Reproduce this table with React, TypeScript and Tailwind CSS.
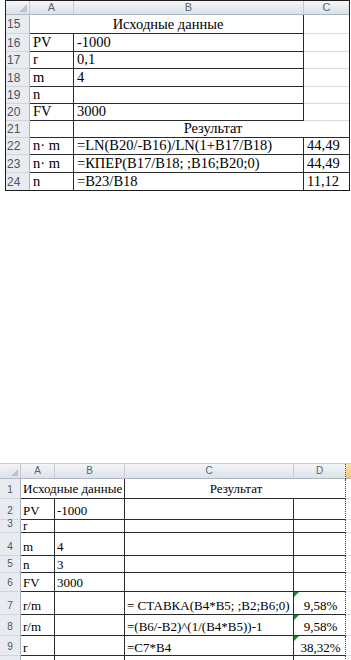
import React from "react";

const serif = "[font-family:'Liberation_Serif','Times_New_Roman',serif]";
const sans = "[font-family:'Liberation_Sans',Arial,sans-serif]";

function Cell({ w, cls = "", children }: { w: string; cls?: string; children?: React.ReactNode }) {
  return (
    <div className={`${w} shrink-0 flex items-end whitespace-nowrap overflow-visible leading-none relative ${cls}`}>
      {children}
    </div>
  );
}

function TopHead({ w, last, children }: { w: string; last?: boolean; children?: React.ReactNode }) {
  return (
    <div
      className={`${w} shrink-0 flex items-center justify-center border-b border-b-[#aeb7c2] ${last ? "" : "border-r border-r-[#c3cad3]"} bg-gradient-to-b from-[#f3f5f8] to-[#dde2e8] text-[11px] text-[#59626e] ${sans} leading-none`}
    >
      {children}
    </div>
  );
}

function TopRowNum({ n, last }: { n: string; last?: boolean }) {
  return (
    <div
      className={`w-[24px] shrink-0 flex items-center pl-[1px] bg-[#e8ebef] border-r border-r-[#a9b3bf] ${last ? "" : "border-b border-b-[#cfd5dc]"} text-[12px] text-[#4d5560] ${sans} leading-none`}
    >
      {n}
    </div>
  );
}

const D = "border-[#2a2a2a]";
const tp = `pl-[3px] pb-[2px] text-[14.5px] text-black ${serif}`;

function TopTable() {
  return (
    <div className="ml-[5px] w-[345px] border border-[#1e1e1e] bg-white">
      <div className="flex h-[14px]">
        <div className="w-[24px] shrink-0 relative border-r border-b border-r-[#c3cad3] border-b-[#aeb7c2] bg-gradient-to-b from-[#f3f5f8] to-[#dde2e8]">
          <svg className="absolute right-[2px] bottom-[2px]" width="8" height="8" viewBox="0 0 8 8">
            <polygon points="8,0 8,8 0,8" fill="#bcc3cc" />
          </svg>
        </div>
        <TopHead w="w-[44px]">A</TopHead>
        <TopHead w="w-[230px]">B</TopHead>
        <TopHead w="w-[45px]" last>C</TopHead>
      </div>

      {/* 15 */}
      <div className="flex h-[19px]">
        <TopRowNum n="15" />
        <Cell w="w-[274px]" cls={`border-r border-b ${D} justify-center ${tp} pl-0`}>Исходные данные</Cell>
        <Cell w="w-[45px]" cls="border-b border-b-[#dadada]" />
      </div>
      {[
        ["16", "PV", "-1000", "h-[18px]"],
        ["17", "r", "0,1", "h-[17px]"],
        ["18", "m", "4", "h-[18px]"],
        ["19", "n", "", "h-[17px]"],
        ["20", "FV", "3000", "h-[17px]"],
      ].map(([n, a, b, h]) => (
        <div key={n} className={`flex ${h}`}>
          <TopRowNum n={n} />
          <Cell w="w-[44px]" cls={`border-r border-b ${D} ${tp}`}>{a}</Cell>
          <Cell w="w-[230px]" cls={`border-r border-b ${D} ${tp}`}>{b}</Cell>
          <Cell w="w-[45px]" cls="border-b border-b-[#dadada]" />
        </div>
      ))}
      {/* 21 */}
      <div className="flex h-[17px]">
        <TopRowNum n="21" />
        <Cell w="w-[44px]" cls={`border-r border-b ${D}`} />
        <Cell w="w-[275px]" cls={`border-b ${D} justify-center ${tp} pl-0`}>Результат</Cell>
      </div>
      {[
        ["22", "n· m", "=LN(B20/-B16)/LN(1+B17/B18)", "44,49", "h-[17px]", true],
        ["23", "n· m", "=КПЕР(B17/B18; ;B16;B20;0)", "44,49", "h-[18px]", true],
        ["24", "n", "=B23/B18", "11,12", "h-[17px]", false],
      ].map(([n, a, b, c, h, bb]) => (
        <div key={n as string} className={`flex ${h}`}>
          <TopRowNum n={n as string} last={!bb} />
          <Cell w="w-[44px]" cls={`border-r ${bb ? "border-b" : ""} ${D} ${tp}`}>{a}</Cell>
          <Cell w="w-[230px]" cls={`border-r ${bb ? "border-b" : ""} ${D} ${tp}`}>{b}</Cell>
          <Cell w="w-[45px]" cls={`${bb ? "border-b" : ""} ${D} ${tp} pl-[2px]`}>{c}</Cell>
        </div>
      ))}
    </div>
  );
}

function BHead({ w, children, orange, noR }: { w: string; children?: React.ReactNode; orange?: boolean; noR?: boolean }) {
  return (
    <div
      className={`${w} shrink-0 flex items-center justify-center border-b border-b-[#aeb7c2] ${noR ? "" : "border-r border-r-[#c6ccd4]"} ${
        orange ? "bg-gradient-to-b from-[#fbe3a8] to-[#f3c46c]" : "bg-gradient-to-b from-[#f3f5f8] to-[#dde2e8]"
      } text-[10px] text-[#59626e] ${sans} leading-none`}
    >
      {children}
    </div>
  );
}

function BNum({ n, last }: { n: string; last?: boolean }) {
  return (
    <div
      className={`w-[21px] shrink-0 flex items-end pb-[3px] justify-center bg-[#e8ebef] border-r border-r-[#a9b3bf] ${last ? "" : "border-b border-b-[#cfd5dc]"} text-[10px] text-[#4d5560] ${sans} leading-none`}
    >
      {n}
    </div>
  );
}

function Dot() {
  return <div className="w-[1px] shrink-0 border-l border-dotted border-l-[#444]" />;
}

const bp = `pl-[2px] text-[13px] text-black ${serif}`;

function Tri() {
  return (
    <svg className="absolute left-0 top-0" width="5" height="5" viewBox="0 0 5 5">
      <polygon points="0,0 5,0 0,5" fill="#1f8a2c" />
    </svg>
  );
}

function BottomTable() {
  const rows: [string, string, string, string, string, string, boolean, string][] = [
    ["2", "PV", "-1000", "", "", "h-[21px]", false, "pb-[2px]"],
    ["3", "r", "", "", "", "h-[13px]", false, "pb-0"],
    ["4", "m", "4", "", "", "h-[23px]", false, "pb-[2px]"],
    ["5", "n", "3", "", "", "h-[17px]", false, "pb-[1px]"],
    ["6", "FV", "3000", "", "", "h-[19px]", false, "pb-[2px]"],
    ["7", "r/m", "", "= СТАВКА(B4*B5; ;B2;B6;0)", "9,58%", "h-[23px]", true, "pb-[2px]"],
    ["8", "r/m", "", "=(B6/-B2)^(1/(B4*B5))-1", "9,58%", "h-[21px]", true, "pb-[2px]"],
    ["9", "r", "", "=C7*B4", "38,32%", "h-[20px]", true, "pb-[1px]"],
  ];
  return (
    <div className="mt-[272px] w-[351px] bg-white border-t border-t-[#c9ced5]">
      <div className="flex h-[15px]">
        <div className="w-[21px] shrink-0 relative border-r border-b border-r-[#c3cad3] border-b-[#aeb7c2] bg-gradient-to-b from-[#f3f5f8] to-[#dde2e8]">
          <svg className="absolute right-[2px] bottom-[2px]" width="7" height="7" viewBox="0 0 7 7">
            <polygon points="7,0 7,7 0,7" fill="#bcc3cc" />
          </svg>
        </div>
        <BHead w="w-[34px]">A</BHead>
        <BHead w="w-[70px]">B</BHead>
        <BHead w="w-[169px]">C</BHead>
        <BHead w="w-[51px]" noR>D</BHead>
        <Dot />
        <BHead w="w-[5px]" orange noR />
      </div>
      {/* row 1 */}
      <div className="flex h-[20px]">
        <BNum n="1" />
        <Cell w="w-[104px]" cls={`border-r border-b ${D} ${bp} pb-[3px]`}>Исходные данные</Cell>
        <Cell w="w-[220px]" cls={`border-b ${D} justify-center ${bp} pl-0 pb-[3px]`}>Результат</Cell>
        <Dot />
        <Cell w="w-[5px]" cls="border-b border-b-[#dadada]" />
      </div>
      {rows.map(([n, a, b, c, d, h, tri, pb]) => (
        <div key={n} className={`flex ${h}`}>
          <BNum n={n} />
          <Cell w="w-[34px]" cls={`border-r border-b ${D} ${bp} ${pb}`}>{a}</Cell>
          <Cell w="w-[70px]" cls={`border-r border-b ${D} ${bp} ${pb}`}>{b}</Cell>
          <Cell w="w-[169px]" cls={`border-r border-b ${D} ${bp} ${pb}`}>{c}</Cell>
          <Cell w="w-[51px]" cls={`border-b ${D} justify-center ${bp} pl-0 ${pb}`}>
            {tri ? <Tri /> : null}
            {d}
          </Cell>
          <Dot />
          <Cell w="w-[5px]" cls="border-b border-b-[#dadada]" />
        </div>
      ))}
      <div className="flex h-[5px]">
        <BNum n="" last />
        <Cell w="w-[34px]" cls={`border-r ${D}`} />
        <Cell w="w-[70px]" cls={`border-r ${D}`} />
        <Cell w="w-[169px]" cls={`border-r ${D}`} />
        <Cell w="w-[51px]" />
        <Dot />
        <Cell w="w-[5px]" />
      </div>
    </div>
  );
}

export default function App() {
  return (
    <div className="w-[351px] h-[660px] bg-white overflow-hidden">
      <TopTable />
      <BottomTable />
    </div>
  );
}
